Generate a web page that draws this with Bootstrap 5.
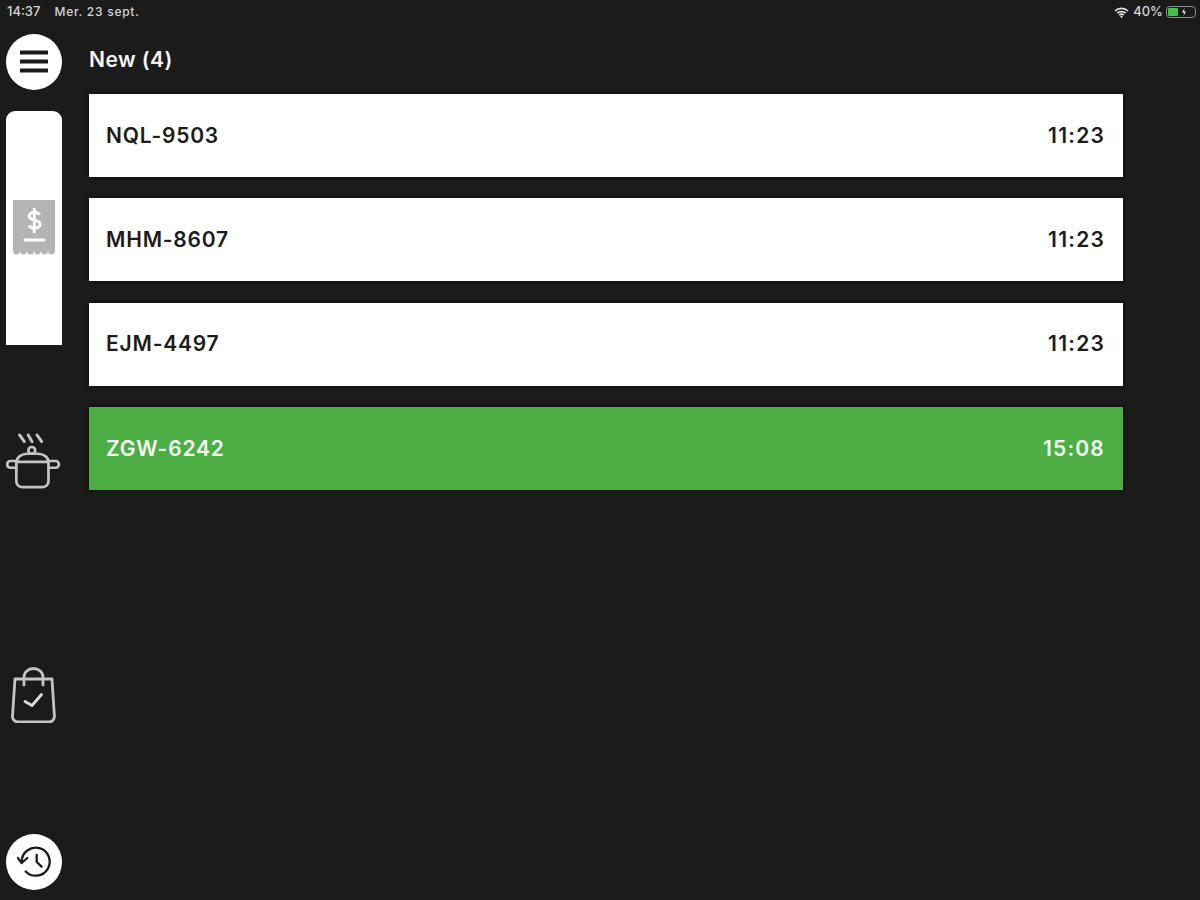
<!DOCTYPE html>
<html lang="en">
<head>
    <meta charset="UTF-8">
    <meta name="viewport" content="width=device-width, initial-scale=1.0">
    <title>Orders</title>
    <link href="https://cdn.jsdelivr.net/npm/bootstrap@5.3.0/dist/css/bootstrap.min.css" rel="stylesheet">
    <style>
        html, body { height: 100%; }
        body { background: #1b1b1b; font-family: Inter, "Liberation Sans", Arial, sans-serif; overflow: hidden; }
        .screen { width: 1200px; height: 900px; }
        .status-bar { height: 24px; padding: 0 4px 0 7px; color: #d4d4d4; font-size: 13px; font-weight: 500; }
        .status-date { margin-left: 14px; font-size: 12px; letter-spacing: .75px; }
        .battery { width: 30px; height: 12px; border: 1px solid #8a8a8a; border-radius: 4px; padding: 1px; margin-left: -1px; }
        .battery-level { width: 10px; height: 100%; background: #3fc24a; border-radius: 1px; }
        .rail { width: 89px; padding: 10px 0 10px 6px; }
        .round-btn { width: 56px; height: 56px; border-radius: 50%; background: #fff; }
        .active-tab { width: 56px; height: 234px; margin-top: 21px; background: #fff; border-radius: 9px 9px 0 0; }
        .pot-icon { margin-top: 87px; width: 56px; height: 58px; }
        .bag-icon { margin-top: 177px; width: 56px; height: 56px; }
        .history-btn { margin-top: 111px; }
        .main-col { width: 1034px; }
        .list-title { height: 70px; padding-top: 23px; margin: 0; color: #f4f4f4; font-size: 21px; font-weight: 600; line-height: 26px; letter-spacing: .45px; }
        .order-row { height: 83px; margin-bottom: 21.33px; padding: 0 18px 0 17px; background: #fff; color: #1c1c1c; font-size: 21px; font-weight: 600; letter-spacing: .8px; box-shadow: 0 0 3px #000; }
        .order-row.is-ready { background: #4caf45; color: #f3f8f1; }
        .order-time { letter-spacing: 1.2px; }
    </style>
</head>
<body>
    <div class="screen d-flex flex-column">
        <!-- Status bar -->
        <div class="status-bar d-flex align-items-center justify-content-between">
            <div><span>14:37</span><span class="status-date">Mer. 23 sept.</span></div>
            <div class="d-flex align-items-center gap-1">
                <svg width="15" height="11" viewBox="0 0 15 11"><path d="M1 4a9.500 9.500 0 0 1 13 0M3.200 6.200a6.400 6.400 0 0 1 8.600 0M5.300 8.200a3.300 3.300 0 0 1 4.400 0" fill="none" stroke="#e4e4e4" stroke-width="1.700"/><circle cx="7.500" cy="9.800" r="1.100" fill="#e4e4e4"/></svg>
                <span>40%</span>
                <div class="battery d-flex align-items-center gap-1"><div class="battery-level"></div><svg width="4" height="8" viewBox="0 0 4 8"><path d="M2.500 0L0 4.500h2L1.500 8 4 3.500H2z" fill="#e8e8e8"/></svg></div>
            </div>
        </div>

        <div class="d-flex flex-grow-1">
            <!-- Left rail -->
            <div class="rail d-flex flex-column flex-shrink-0">
                <div class="round-btn d-flex align-items-center justify-content-center">
                    <svg width="28" height="24" viewBox="0 0 28 24"><path d="M1 2.500h26M1 11.500h26M1 20.500h26" stroke="#1b1b1b" stroke-width="4" stroke-linecap="round"/></svg>
                </div>
                <div class="active-tab d-flex align-items-center justify-content-center">
                    <svg width="42" height="56" viewBox="0 0 42 56">
                        <path d="M0 0h42v50a3.500 4.500 0 0 1-7 0 3.500 4.500 0 0 1-7 0 3.500 4.500 0 0 1-7 0 3.500 4.500 0 0 1-7 0 3.500 4.500 0 0 1-7 0 3.500 4.500 0 0 1-7 0z" fill="#b4b4b4"/>
                        <path d="M26.500 15c-.8-1.800-2.600-2.700-5-2.700-3 0-5.300 1.500-5.300 3.900 0 5 10.900 2.700 10.900 8 0 2.400-2.400 3.900-5.500 3.900-2.600 0-4.700-1-5.600-2.800M21.300 8v25" fill="none" stroke="#fff" stroke-width="2.900"/>
                        <path d="M12 40h19" stroke="#fff" stroke-width="3" stroke-linecap="round"/>
                    </svg>
                </div>
                <div class="pot-icon d-flex justify-content-center">
                    <svg width="58" height="58" viewBox="0 0 58 58" fill="none" stroke="#c4c4c4" stroke-width="2.800" stroke-linecap="round" stroke-linejoin="round">
                        <path d="M14 2l5 7M23 2l4 7M32 2l5 7" stroke-width="3"/>
                        <circle cx="26.700" cy="18" r="3.500"/>
                        <path d="M11 30c0-5 5-8.500 11-8.500h11c6 0 11 3.500 11 8.500z"/>
                        <path d="M10.700 29H4.700a3.500 3.500 0 0 0 0 7h6M44 29h7.300a3.500 3.500 0 0 1 0 7H44"/>
                        <path d="M10.700 30v20a6 6 0 0 0 6 6H38a6 6 0 0 0 6-6V30"/>
                    </svg>
                </div>
                <div class="bag-icon d-flex justify-content-center">
                    <svg width="56" height="56" viewBox="0 0 56 56" fill="none" stroke="#c4c4c4" stroke-width="2.800" stroke-linecap="round" stroke-linejoin="round">
                        <path d="M9 12h37l2.400 37a5.500 5.500 0 0 1-5.500 6H12a5.500 5.500 0 0 1-5.500-6z"/>
                        <path d="M18 18V10a9.500 8.500 0 0 1 19 0v8"/>
                        <path d="M19 34.500l7 4 9.500-11" stroke="#dcdcdc"/>
                    </svg>
                </div>
                <div class="round-btn history-btn d-flex align-items-center justify-content-center">
                    <svg width="34" height="32" viewBox="0 0 34 32" fill="none" stroke="#1b1b1b" stroke-width="2.300" stroke-linecap="round" stroke-linejoin="round">
                        <path d="M4.700 15.500a14 14 0 1 1 4 10"/>
                        <path d="M.8 12l3.900 5 5.600-5"/>
                        <path d="M19.700 9v7l4.900 4.700"/>
                    </svg>
                </div>
            </div>

            <!-- Order list -->
            <div class="main-col">
                <h5 class="list-title">New (4)</h5>
                <div id="orderList"></div>
            </div>
        </div>
    </div>

    <script src="https://cdn.jsdelivr.net/npm/bootstrap@5.3.0/dist/js/bootstrap.bundle.min.js"></script>
    <script>
        const orders = [
            { code: 'NQL-9503', time: '11:23' },
            { code: 'MHM-8607', time: '11:23' },
            { code: 'EJM-4497', time: '11:23' },
            { code: 'ZGW-6242', time: '15:08', ready: true }
        ];

        const orderList = document.getElementById('orderList');
        orders.forEach(order => {
            const item = document.createElement('div');
            item.className = 'order-row d-flex align-items-center justify-content-between' + (order.ready ? ' is-ready' : '');
            item.innerHTML = `<span>${order.code}</span><span class="order-time">${order.time}</span>`;
            orderList.appendChild(item);
        });
    </script>
</body>
</html>
